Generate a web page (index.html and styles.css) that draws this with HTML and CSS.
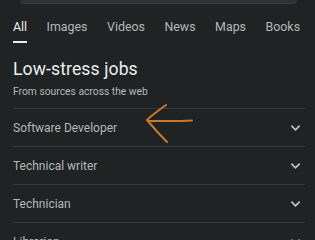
FILE: index.html
```html
<!DOCTYPE html>
<html lang="en">
<head>
    <meta charset="UTF-8">
    <title>Low-stress jobs</title>
    <link rel="stylesheet" href="styles.css">
</head>
<body>
    <div class="search-edge"></div>

    <nav class="tabs">
        <span class="tab active">All</span>
        <span class="tab">Images</span>
        <span class="tab">Videos</span>
        <span class="tab">News</span>
        <span class="tab">Maps</span>
        <span class="tab">Books</span>
    </nav>

    <section class="panel">
        <h1 class="panel-title">Low-stress jobs</h1>
        <div class="panel-sub">From sources across the web</div>

        <ul class="jobs">
            <li class="job">
                <span>Software Developer</span>
                <svg class="chev" viewBox="0 0 12 8"><path d="M1.5 1.5 6 6l4.5-4.5"/></svg>
            </li>
            <li class="job">
                <span>Technical writer</span>
                <svg class="chev" viewBox="0 0 12 8"><path d="M1.5 1.5 6 6l4.5-4.5"/></svg>
            </li>
            <li class="job">
                <span>Technician</span>
                <svg class="chev" viewBox="0 0 12 8"><path d="M1.5 1.5 6 6l4.5-4.5"/></svg>
            </li>
            <li class="job">
                <span>Librarian</span>
                <svg class="chev" viewBox="0 0 12 8"><path d="M1.5 1.5 6 6l4.5-4.5"/></svg>
            </li>
        </ul>
    </section>

    <!-- hand-drawn arrow on top of the screenshot -->
    <svg class="scribble" viewBox="0 0 50 42">
        <path d="M21 1 C14 6 7 11 2 16 C7 22 13 29 22 38"/>
        <path d="M3 17 C16 17 32 17.5 47 16.5"/>
    </svg>
</body>
</html>
```

FILE: styles.css
```css
:root {
    --bg: #1f2323;
    --line: #363a3b;
    --text: #d6d8da;
    --muted: #b4b8ba;
}

body {
    margin: 0;
    background: var(--bg);
    font-family: Roboto, "Noto Sans", sans-serif;
    color: var(--text);
    width: 315px;
    height: 240px;
    overflow: hidden;
    position: relative;
}

.search-edge {
    height: 3px;
    margin: 0 18px 0 20px;
    background: #2f3233;
    border-bottom: 1px solid #3b3e3f;
    border-radius: 0 0 12px 12px;
}

.tabs {
    display: flex;
    gap: 19.5px;
    padding: 15px 0 0 13px;
    font-size: 12.4px;
    color: var(--muted);
    white-space: nowrap;
}

.tab {
    padding-bottom: 7px;
    border-bottom: 2px solid transparent;
}

.tab.active {
    color: #eceef0;
    border-bottom-color: #e8eaed;
}

.panel {
    padding: 0 10px 0 13px;
}

.panel-title {
    margin: 16px 0 0;
    font-size: 17.6px;
    font-weight: 400;
    color: #eceef0;
    letter-spacing: 0.1px;
}

.panel-sub {
    margin-top: 6px;
    font-size: 10.3px;
    color: var(--muted);
}

.jobs {
    list-style: none;
    margin: 10px 0 0;
    padding: 0;
}

.job {
    display: flex;
    align-items: center;
    justify-content: space-between;
    height: 37px;
    border-top: 1px solid var(--line);
    font-size: 12px;
    color: var(--muted);
    padding-right: 4px;
}

.chev {
    width: 11px;
    height: 8px;
    fill: none;
    stroke: #c4c7c9;
    stroke-width: 1.8;
}

.scribble {
    position: absolute;
    left: 145px;
    top: 104px;
    width: 50px;
    height: 42px;
    fill: none;
    stroke: #c8782e;
    stroke-width: 2;
    stroke-linecap: round;
    filter: drop-shadow(0 0 0.6px #3a2410);
}
```
